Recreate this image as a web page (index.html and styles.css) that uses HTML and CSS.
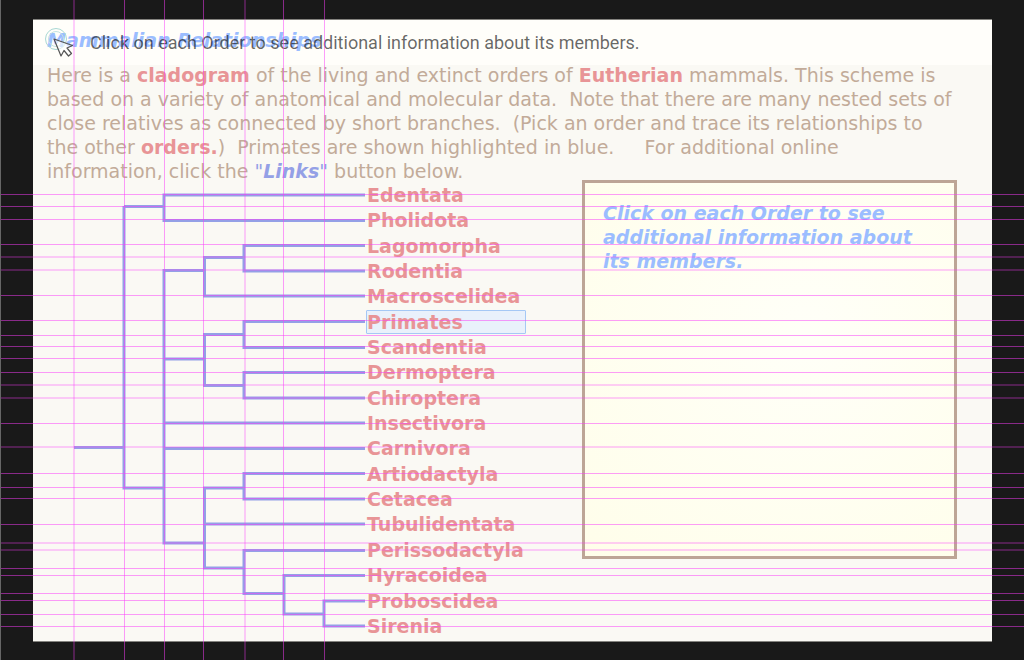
FILE: index.html
```
<!DOCTYPE html>
<html lang="en">
<head>
  <meta charset="UTF-8">
  <meta name="viewport" content="width=device-width, initial-scale=1.0">
  <title>Mammalian Relationships</title>
  <link rel="stylesheet" href="styles.css">
</head>
<body>

<main class="sheet">
  <header class="top">
    <h1 class="title">Mammalian Relationships</h1>
    <div class="hint">
      <svg class="cursor" width="36" height="36" viewBox="0 0 36 36" fill="none">
        <circle cx="13" cy="14" r="10.5" stroke="#a9d8d4"/>
        <circle cx="13" cy="14" r="7.5" stroke="#c3e3e0"/>
        <path d="M11 14 L18 31 L21 25.500 L25.500 31 L28.500 28.500 L24 23 L29.500 20.500 Z" fill="#fff" fill-opacity=".6" stroke="#555" stroke-width="1.2" stroke-linejoin="round"/>
      </svg>
      <span>Click on each Order to see additional information about its members.</span>
    </div>
  </header>

  <p class="intro">Here is a <b>cladogram</b> of the living and extinct orders of <b>Eutherian</b> mammals. This scheme is<br>
based on a variety of anatomical and molecular data.&nbsp; Note that there are many nested sets of<br>
close relatives as connected by short branches.&nbsp; (Pick an order and trace its relationships to<br>
the other <b>orders.</b>)&nbsp; Primates are shown highlighted in blue.&nbsp; &nbsp;&nbsp; For additional online<br>
information, click the <em>"<strong>Links</strong>"</em> button below.</p>

  <div class="board">
    <!-- cladogram branches -->
    <svg class="tree" width="292" height="461" viewBox="74 180 292 461">
      <path id="branches" d="M74 447.500H124 M124 206V489 M124 206.500H164 M164 195V220 M162.500 195H365 M162.500 220.500H365
        M122.500 488H164 M164 269V543 M164 270.500H204 M204.500 257V296 M203 257.500H244 M244 245V271 M242.500 245.500H365 M242.500 271H365 M203 296H365
        M164 359H204 M204.500 334V385 M203 334.500H244 M244 321V347 M242.500 321.500H365 M242.500 347.500H365
        M203 385.500H244 M244 372V398 M242.500 372.500H365 M242.500 398H365
        M164 423H365 M164 448.500H365
        M162.500 543H204 M204.500 488V568 M203 488H244 M244 473V499 M242.500 473.500H365 M242.500 499H365 M204 524H365
        M203 568H244 M244 550V593 M242.500 550.500H365 M242.500 593.500H284 M284 575V614 M282.500 575.500H365
        M282.500 614H324 M324 601V626 M322.500 601H365 M322.500 626H365"/>
    </svg>

    <ul class="orders">
      <li><a href="#">Edentata</a></li>
      <li><a href="#">Pholidota</a></li>
      <li><a href="#">Lagomorpha</a></li>
      <li><a href="#">Rodentia</a></li>
      <li><a href="#">Macroscelidea</a></li>
      <li><a href="#" class="active">Primates</a></li>
      <li><a href="#">Scandentia</a></li>
      <li><a href="#">Dermoptera</a></li>
      <li><a href="#">Chiroptera</a></li>
      <li><a href="#">Insectivora</a></li>
      <li><a href="#">Carnivora</a></li>
      <li><a href="#">Artiodactyla</a></li>
      <li><a href="#">Cetacea</a></li>
      <li><a href="#">Tubulidentata</a></li>
      <li><a href="#">Perissodactyla</a></li>
      <li><a href="#">Hyracoidea</a></li>
      <li><a href="#">Proboscidea</a></li>
      <li><a href="#">Sirenia</a></li>
    </ul>

    <section class="info">Click on each Order to see<br>additional information about<br>its members.</section>
  </div>
</main>

<!-- alignment guides over the whole window -->
<svg class="guides" id="guides"></svg>

<script>
  const svg = document.getElementById("guides");
  const xs = [124, 164, 203, 283, 324];
  const xsSoft = [73, 244];
  const ys = [194, 206, 219, 244, 295, 320, 335, 346, 358, 372, 423, 473, 487, 498, 524, 568, 575, 593, 600, 614, 626];
  const ysSoft = [256, 269, 384, 397, 446, 542, 549];

  function guide(x, y, w, h, type) {
    const r = document.createElementNS("http://www.w3.org/2000/svg", "rect");
    r.setAttribute("x", x);
    r.setAttribute("y", y);
    r.setAttribute("width", w);
    r.setAttribute("height", h);
    r.setAttribute("class", type);
    svg.appendChild(r);
  }

  xs.forEach(x => guide(x, 0, 1, "100%", "sharp"));
  xsSoft.forEach(x => guide(x, 0, 2, "100%", "soft"));
  ys.forEach(y => guide(0, y, "100%", 1, "sharp"));
  ysSoft.forEach(y => guide(0, y, "100%", 2, "soft"));
  guide(0, 0, 1, "100%", "edge");
</script>
</body>
</html>
```
FILE: styles.css
```
* {
  box-sizing: border-box;
}

body {
  margin: 0;
  min-height: 100vh;
  padding: 19px 32px 19px 33px;
  background: #191919;
  font-family: "DejaVu Sans", Verdana, sans-serif;
  font-size: 19px;
  line-height: 24px;
  color: #c2ab99;
}

.sheet {
  background: #faf9f4;
  border-top: 1px solid #84837f;
  border-bottom: 1px solid #84837f;
}

.top {
  position: relative;
  height: 45px;
  padding: 8px 14px;
  background: #fffefa;
}

.title {
  margin: 0;
  font-size: 19px;
  line-height: 24px;
  font-style: italic;
  color: #9bbdff;
}

/* hint lies over the title */
.hint {
  position: absolute;
  top: 5px;
  left: 10px;
  display: flex;
  align-items: center;
  gap: 11px;
  font-family: Roboto, sans-serif;
  font-size: 18px;
  color: rgba(0, 0, 0, 0.6);
}

.intro {
  margin: -2px 0 0;
  padding: 0 14px;
  white-space: nowrap;
}

.intro b {
  color: #e89496;
}

.intro em {
  font-style: italic;
  color: #94a0e6;
}

.board {
  display: grid;
  grid-template-columns: 292px 160px 1fr;
  align-items: stretch;
  margin-top: -3px;
  padding: 0 35px 0 41px;
}

.tree {
  display: block;
}

#branches {
  fill: none;
  stroke: #94a0e6;
  stroke-width: 3;
}

.orders {
  display: flex;
  flex-direction: column;
  justify-content: space-between;
  margin: 0;
  padding: 3px 0;
  list-style: none;
  font-weight: bold;
}

.orders a {
  display: block;
  height: 24px;
  border: 1px solid transparent;
  line-height: 22px;
  color: #e89496;
  text-decoration: none;
}

.orders .active {
  background: #e9f1fb;
  border-color: #a5c8f5;
  border-radius: 1px;
}

.info {
  align-self: start;
  height: 379px;
  margin-left: 56px;
  padding: 18px;
  border: 3px solid #bda596;
  background: radial-gradient(ellipse at 60% 40%, #fffff8, #fffeea);
  font-weight: bold;
  font-style: italic;
  color: #9bbdff;
}

.guides {
  position: absolute;
  top: 0;
  left: 0;
  width: 100%;
  height: 100%;
  pointer-events: none;
}

.sharp {
  fill: rgba(250, 60, 250, 0.5);
}

.soft {
  fill: rgba(250, 60, 250, 0.25);
}

.edge {
  fill: #666;
}
```
